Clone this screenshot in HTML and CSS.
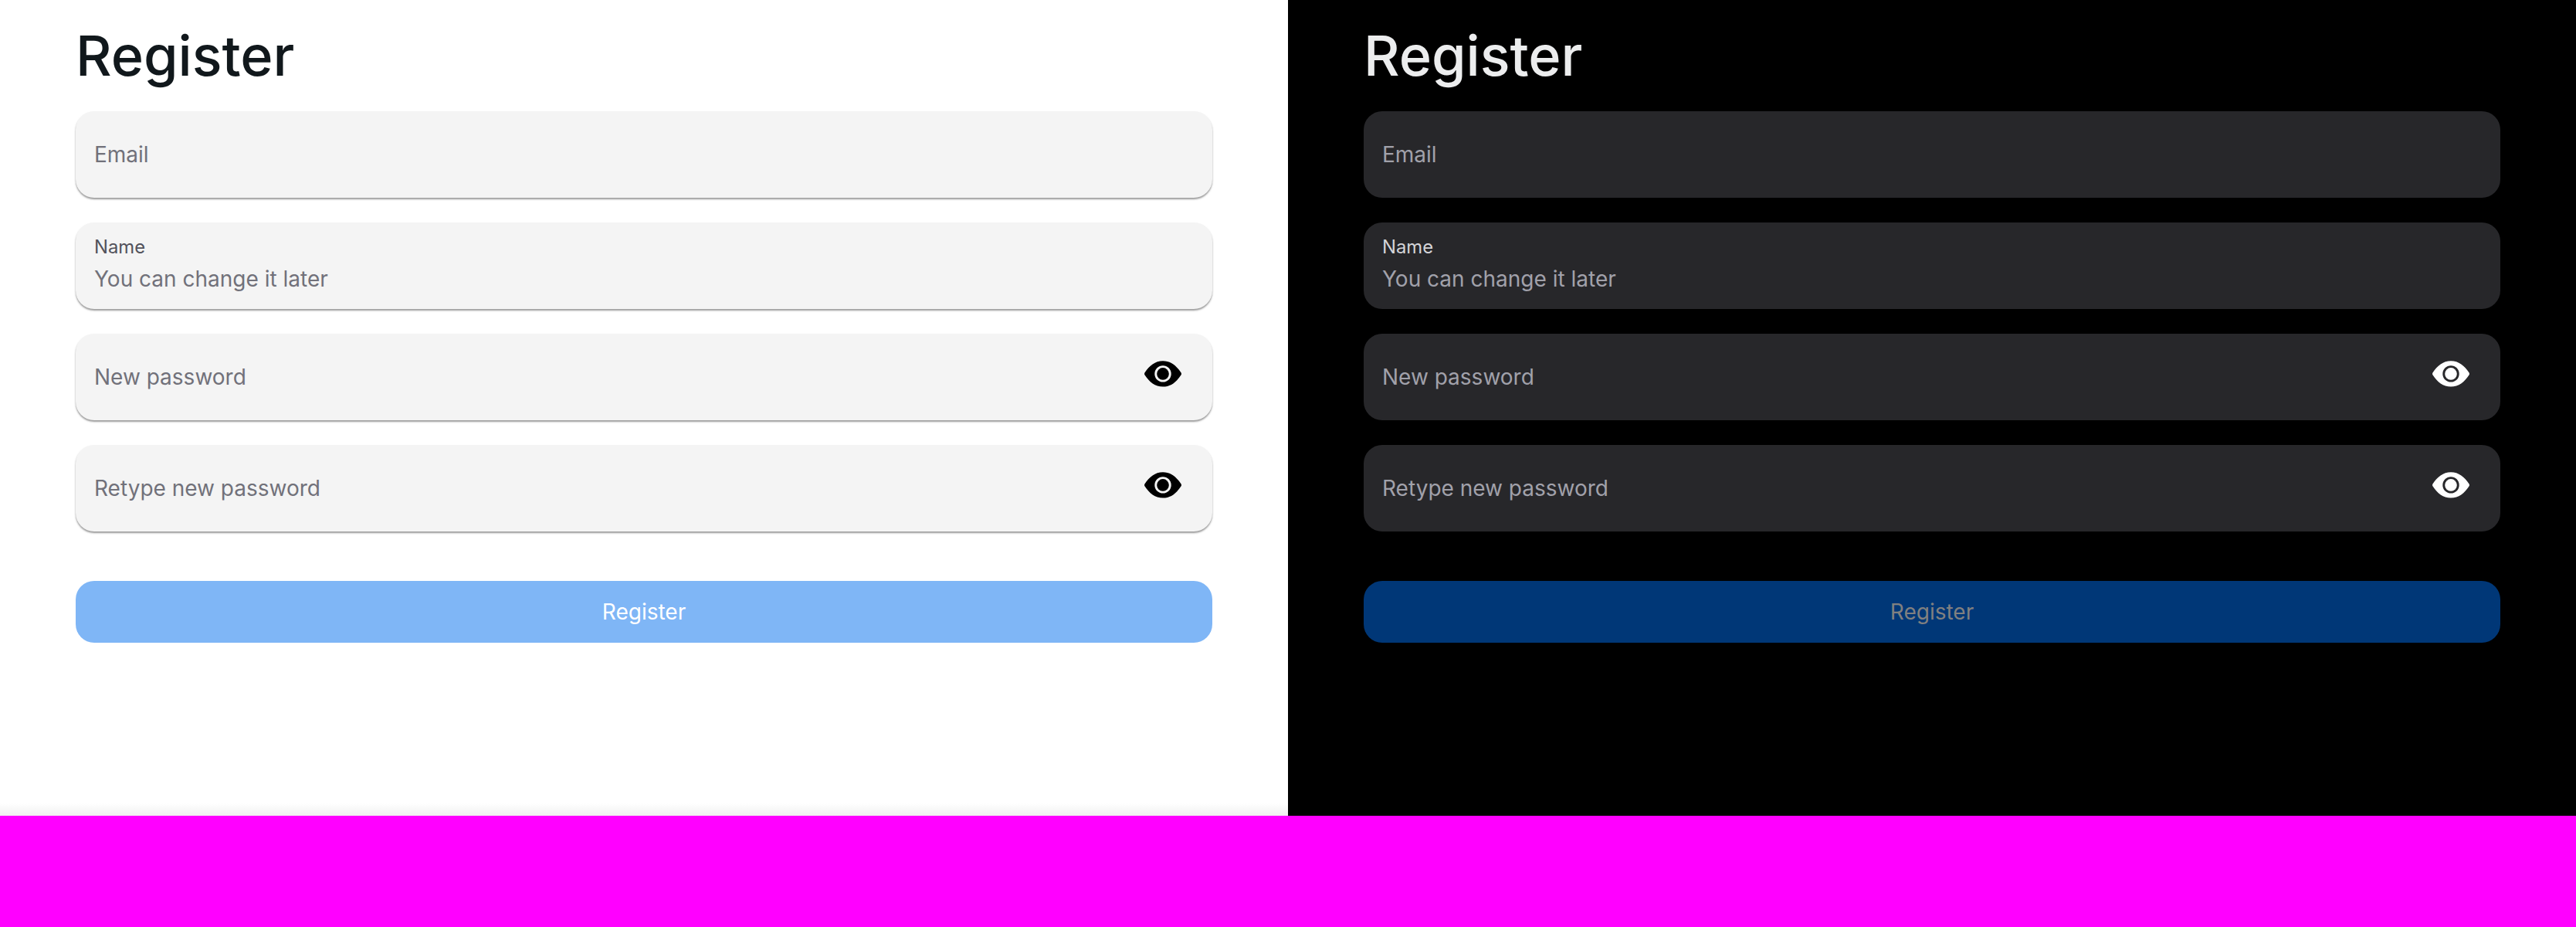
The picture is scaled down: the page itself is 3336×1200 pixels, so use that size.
FILE: index.html
```html
<!DOCTYPE html>
<html lang="en">
<head>
<meta charset="utf-8">
<title>Register</title>
<link rel="stylesheet" href="styles.css">
</head>
<body>
<svg class="defs" aria-hidden="true">
  <symbol id="eye" viewBox="0 0 48 34">
    <path fill-rule="evenodd" d="M24 .2C14 .2 6.400 6.300.4 15.600Q-.3 16.900.4 18.200C6.400 27.500 14 33.600 24 33.600S41.600 27.500 47.600 18.200Q48.300 16.900 47.600 15.600C41.600 6.300 34 .2 24 .2ZM24 6.200a10.700 10.700 0 1 1 0 21.400a10.700 10.700 0 1 1 0-21.400Z"/>
    <circle cx="24" cy="16.900" r="7.800"/>
  </symbol>
</svg>
<main class="themes">
  <section class="panel light">
    <h1>Register</h1>
    <form class="form">
      <div class="field"><span class="placeholder">Email</span></div>
      <div class="field stacked"><span class="label">Name</span><span class="placeholder">You can change it later</span></div>
      <div class="field"><span class="placeholder">New password</span><svg class="eye"><use href="#eye"/></svg></div>
      <div class="field"><span class="placeholder">Retype new password</span><svg class="eye"><use href="#eye"/></svg></div>
      <button class="submit" type="button">Register</button>
    </form>
  </section>
  <section class="panel dark">
    <h1>Register</h1>
    <form class="form">
      <div class="field"><span class="placeholder">Email</span></div>
      <div class="field stacked"><span class="label">Name</span><span class="placeholder">You can change it later</span></div>
      <div class="field"><span class="placeholder">New password</span><svg class="eye"><use href="#eye"/></svg></div>
      <div class="field"><span class="placeholder">Retype new password</span><svg class="eye"><use href="#eye"/></svg></div>
      <button class="submit" type="button">Register</button>
    </form>
  </section>
</main>
</body>
</html>
```
FILE: styles.css
```css
* { box-sizing: border-box; }
body {
  margin: 0;
  height: 1200px;
  background: #ff00ff;
  font-family: Inter, sans-serif;
  overflow: hidden;
}
.defs { display: none; }
.themes {
  display: grid;
  grid-template-columns: 1fr 1fr;
  height: 1056px;
}
.panel {
  padding: 32px 98px 0;
  background: var(--bg);
  color: var(--fg);
}
.light {
  --bg: #fff;
  --fg: #11181c;
  --field: #f4f4f4;
  --muted: #71717a;
  --label: #52525b;
  --icon: #000;
  --shadow: 0 2px 4px rgb(0 0 0 / 5%), 0 2px 2px rgb(0 0 0 / 36%);
  --button: #7fb6f6;
  --button-text: #fff;
  background: linear-gradient(to bottom, #fff 1040px, #f0f0f0 1056px);
}
.dark {
  --bg: #000;
  --fg: #ecedee;
  --field: #27272a;
  --muted: #a1a1aa;
  --label: #d4d4d8;
  --icon: #fff;
  --shadow: none;
  --button: #003777;
  --button-text: #808080;
}
h1 {
  margin: 0;
  font-size: 72px;
  line-height: 80px;
  font-weight: 500;
}
.form {
  display: flex;
  flex-direction: column;
  gap: 32px;
  margin-top: 32px;
}
.field {
  display: flex;
  align-items: center;
  justify-content: space-between;
  height: 112px;
  padding: 0 40px 0 24px;
  border-radius: 24px;
  background: var(--field);
  box-shadow: var(--shadow);
}
.stacked {
  flex-direction: column;
  align-items: flex-start;
  justify-content: flex-start;
  padding-top: 15px;
}
.placeholder {
  font-size: 28px;
  line-height: 40px;
  color: var(--muted);
}
.label {
  font-size: 23.8px;
  line-height: 34px;
  color: var(--label);
}
.stacked .placeholder { margin-top: 4px; }
.eye {
  width: 48px;
  height: 34px;
  margin-bottom: 8px;
  fill: var(--icon);
}
.submit {
  height: 80px;
  margin-top: 32px;
  border: 0;
  border-radius: 24px;
  background: var(--button);
  color: var(--button-text);
  font: 400 28px/40px Inter, sans-serif;
}
```
